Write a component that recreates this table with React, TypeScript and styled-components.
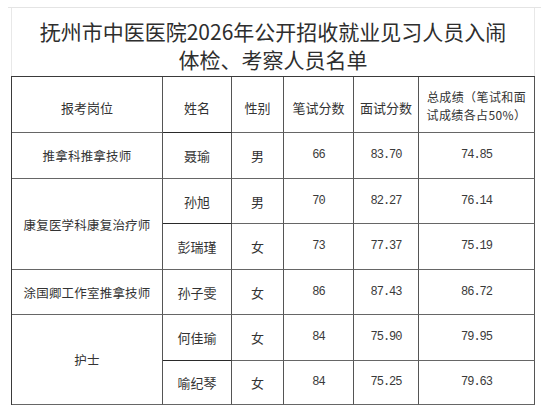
import styled, { createGlobalStyle } from "styled-components";

const GlobalStyle = createGlobalStyle`
    html, body {
        margin: 0;
        padding: 0;
        background: #ffffff;
    }
    body {
        font-family: "Noto Sans CJK SC", "Noto Sans", sans-serif;
        color: #222;
    }
`

const Sheet = styled.div`
    margin: 7px 0 0 8px;
    border-top: 1px solid #e4e4e4;
    padding-left: 3px;
    width: 530px;
`

const Title = styled.h1`
    box-sizing: border-box;
    width: 524px;
    height: 68px;
    margin: 0;
    padding-top: 9px;
    border-left: 1px solid #e8e8e8;
    border-right: 1px solid #e8e8e8;
    font-size: 21px;
    font-weight: 400;
    line-height: 28px;
    text-align: center;
    color: #2e2e2e;
`

const Table = styled.table`
    border-collapse: separate;
    border-spacing: 0;
    table-layout: fixed;
    width: 524px;
    border-top: 1px solid #3a3a3a;
    border-left: 1px solid #3a3a3a;
`

const Row = styled.tr<{ $h: number }>`
    height: ${p => p.$h}px;
`

const Cell = styled.td<{ $mono?: boolean; $pos?: boolean; $head?: boolean; $dark?: boolean }>`
    box-sizing: border-box;
    padding: ${p => (p.$head ? "6px 0 0" : "0")};
    border-right: 1px solid #555;
    border-bottom: 1px solid ${p => (p.$dark ? "#2a2a2a" : "#666")};
    text-align: center;
    vertical-align: middle;
    color: #333;
    font-size: ${p => (p.$pos ? "12.5px" : "13px")};
    letter-spacing: ${p => (p.$pos ? "0.2px" : "0")};
    line-height: 15px;
    ${p => p.$mono && `
        font-family: "Liberation Mono", "DejaVu Sans Mono", monospace;
        font-size: 12px;
        letter-spacing: -1px;
        color: #3a3a3a;
    `}
`

const NoteCell = styled(Cell)`
    padding-top: 2px;
    font-size: 12px;
    line-height: 17.5px;
    letter-spacing: 0.4px;
`

const widths = [151, 69, 52, 70, 65, 116];

interface IPerson {
    name: string
    sex: string
    written: string
    interview: string
    total: string
}

interface IGroup {
    post: string
    people: IPerson[]
}

const groups: IGroup[] = [
    { post: "推拿科推拿技师", people: [{ name: "聂瑜", sex: "男", written: "66", interview: "83.70", total: "74.85" }] },
    {
        post: "康复医学科康复治疗师", people: [
            { name: "孙旭", sex: "男", written: "70", interview: "82.27", total: "76.14" },
            { name: "彭瑞瑾", sex: "女", written: "73", interview: "77.37", total: "75.19" },
        ]
    },
    { post: "涂国卿工作室推拿技师", people: [{ name: "孙子雯", sex: "女", written: "86", interview: "87.43", total: "86.72" }] },
    {
        post: "护士", people: [
            { name: "何佳瑜", sex: "女", written: "84", interview: "75.90", total: "79.95" },
            { name: "喻纪琴", sex: "女", written: "84", interview: "75.25", total: "79.63" },
        ]
    },
]

const rowHeights = [46, 45, 46, 45, 46, 44];

const App = () => {
    let idx = 0;
    return <>
        <GlobalStyle />
        <Sheet>
            <Title>抚州市中医医院2026年公开招收就业见习人员入闹<br />体检、考察人员名单</Title>
            <Table>
                <colgroup>
                    {widths.map((w, i) => <col key={i} style={{ width: w }} />)}
                </colgroup>
                <tbody>
                    <Row $h={56}>
                        <Cell $head>报考岗位</Cell>
                        <Cell $head $dark>姓名</Cell>
                        <Cell $head>性别</Cell>
                        <Cell $head>笔试分数</Cell>
                        <Cell $head>面试分数</Cell>
                        <NoteCell>总成绩（笔试和面<br />试成绩各占50%）</NoteCell>
                    </Row>
                    {groups.map(g => g.people.map((p, j) => {
                        const h = rowHeights[idx++];
                        return <Row $h={h} key={p.name}>
                            {j === 0 && <Cell $pos rowSpan={g.people.length}>{g.post}</Cell>}
                            <Cell $dark={j === 0 && g.people.length > 1}>{p.name}</Cell>
                            <Cell>{p.sex}</Cell>
                            <Cell $mono>{p.written}</Cell>
                            <Cell $mono>{p.interview}</Cell>
                            <Cell $mono>{p.total}</Cell>
                        </Row>
                    }))}
                </tbody>
            </Table>
        </Sheet>
    </>
}

export default App
